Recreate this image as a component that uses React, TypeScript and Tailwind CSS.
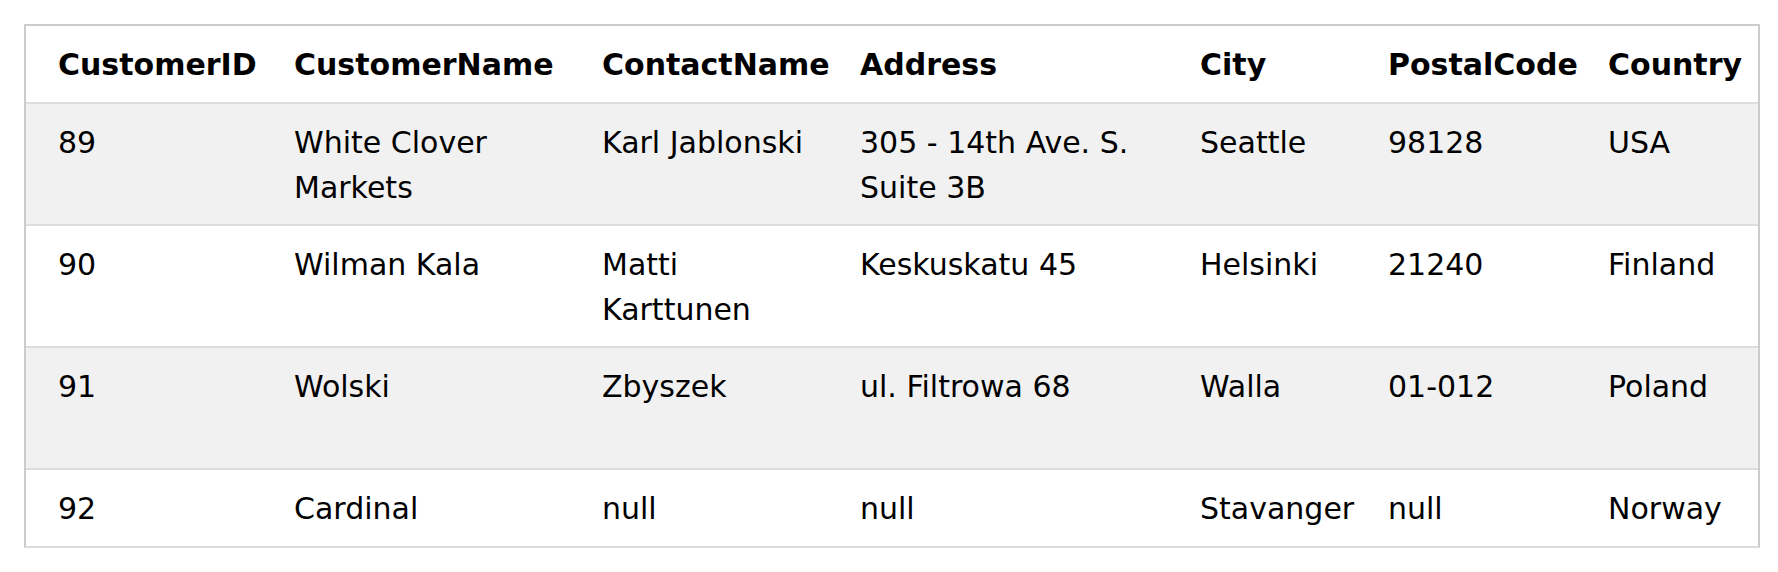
import React from "react";

const headers = ["CustomerID", "CustomerName", "ContactName", "Address", "City", "PostalCode", "Country"];

const rows: string[][][] = [
  [["89"], ["White Clover", "Markets"], ["Karl Jablonski"], ["305 - 14th Ave. S.", "Suite 3B"], ["Seattle"], ["98128"], ["USA"]],
  [["90"], ["Wilman Kala"], ["Matti", "Karttunen"], ["Keskuskatu 45"], ["Helsinki"], ["21240"], ["Finland"]],
  [["91"], ["Wolski"], ["Zbyszek"], ["ul. Filtrowa 68"], ["Walla"], ["01-012"], ["Poland"]],
  [["92"], ["Cardinal"], ["null"], ["null"], ["Stavanger"], ["null"], ["Norway"]],
];

const gridCols = "grid grid-cols-[252px_308px_258px_340px_188px_220px_166px]";

export default function App() {
  return (
    <div className="w-[1778px] h-[572px] bg-white pt-6 pl-6 font-['DejaVu_Sans',sans-serif] text-black">
      <div className="w-[1736px] border-2 border-[#ccc] border-b-[#ddd]">
        <div className={`${gridCols} h-[78px] border-b-2 border-[#ddd] bg-white`}>
          {headers.map((h, i) => (
            <div
              key={h}
              className={`${i === 0 ? "pl-8" : "pl-4"} pt-4 text-[30px] font-bold leading-[45px] whitespace-nowrap`}
            >
              {h}
            </div>
          ))}
        </div>
        {rows.map((r, ri) => {
          const last = ri === rows.length - 1;
          return (
            <div
              key={ri}
              className={`${gridCols} ${last ? "h-[76px]" : "h-[122px] border-b-2 border-[#ddd]"} ${ri % 2 === 0 ? "bg-[#f1f1f1]" : "bg-white"}`}
            >
              {r.map((cell, ci) => (
                <div
                  key={ci}
                  className={`${ci === 0 ? "pl-8" : "pl-4"} pt-4 text-[30px] leading-[45px] whitespace-nowrap`}
                >
                  {cell.map((line, li) => (
                    <div key={li}>{line}</div>
                  ))}
                </div>
              ))}
            </div>
          );
        })}
      </div>
    </div>
  );
}
